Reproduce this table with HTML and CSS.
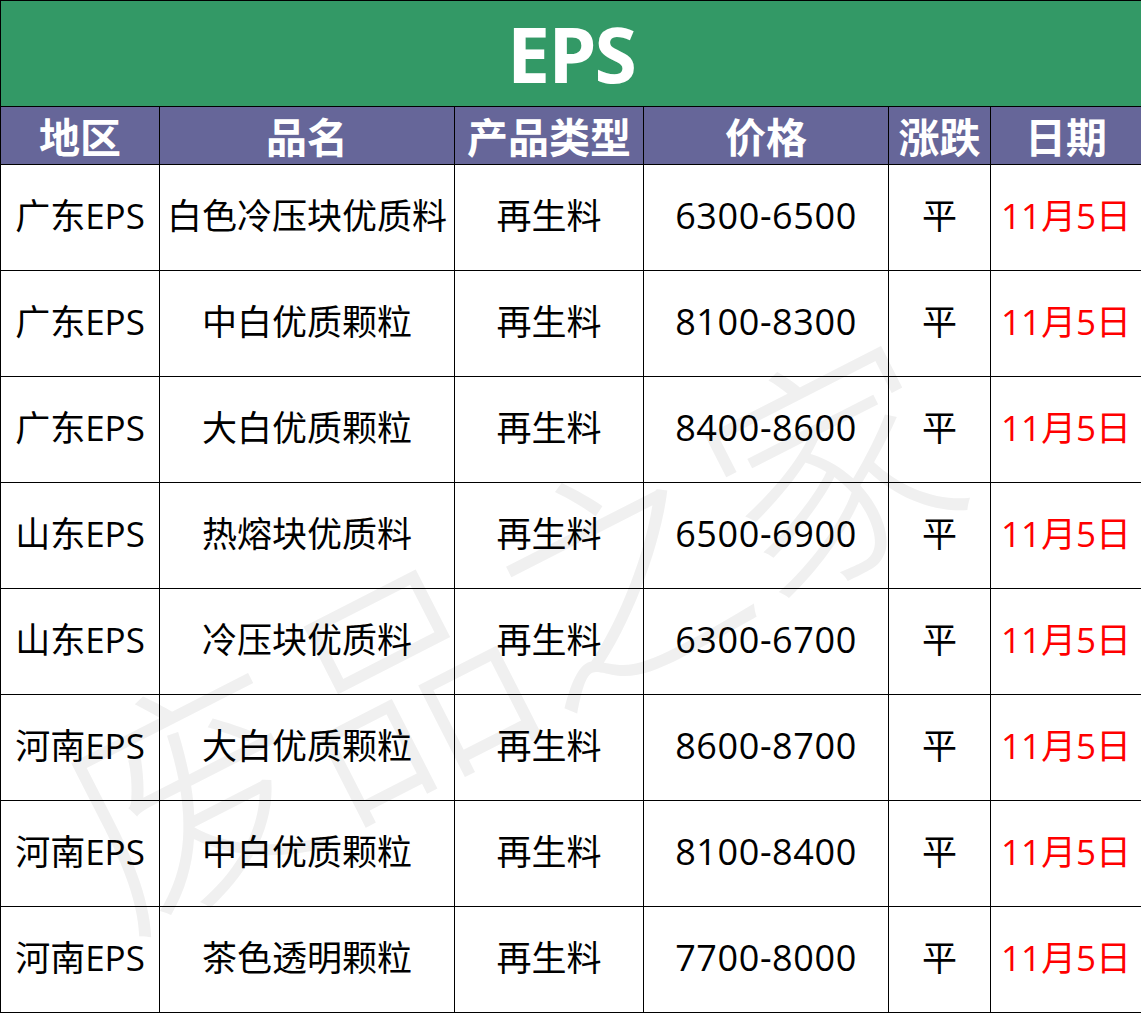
FILE: index.html
```html
<!DOCTYPE html>
<html lang="zh">
<head>
<meta charset="utf-8">
<title>EPS</title>
<link rel="stylesheet" href="styles.css">
</head>
<body>
<div class="sheet">
  <div class="watermark">废品之家</div>
  <table class="grid">
    <colgroup>
      <col class="c1"><col class="c2"><col class="c3"><col class="c4"><col class="c5"><col class="c6">
    </colgroup>
    <thead>
      <tr class="title-row"><th colspan="6" class="title">EPS</th></tr>
      <tr class="head-row">
        <th>地区</th><th>品名</th><th>产品类型</th><th>价格</th><th>涨跌</th><th>日期</th>
      </tr>
    </thead>
    <tbody>
      <tr><td>广东EPS</td><td>白色冷压块优质料</td><td>再生料</td><td class="price">6300-6500</td><td>平</td><td class="date">11月5日</td></tr>
      <tr><td>广东EPS</td><td>中白优质颗粒</td><td>再生料</td><td class="price">8100-8300</td><td>平</td><td class="date">11月5日</td></tr>
      <tr><td>广东EPS</td><td>大白优质颗粒</td><td>再生料</td><td class="price">8400-8600</td><td>平</td><td class="date">11月5日</td></tr>
      <tr><td>山东EPS</td><td>热熔块优质料</td><td>再生料</td><td class="price">6500-6900</td><td>平</td><td class="date">11月5日</td></tr>
      <tr><td>山东EPS</td><td>冷压块优质料</td><td>再生料</td><td class="price">6300-6700</td><td>平</td><td class="date">11月5日</td></tr>
      <tr><td>河南EPS</td><td>大白优质颗粒</td><td>再生料</td><td class="price">8600-8700</td><td>平</td><td class="date">11月5日</td></tr>
      <tr><td>河南EPS</td><td>中白优质颗粒</td><td>再生料</td><td class="price">8100-8400</td><td>平</td><td class="date">11月5日</td></tr>
      <tr><td>河南EPS</td><td>茶色透明颗粒</td><td>再生料</td><td class="price">7700-8000</td><td>平</td><td class="date">11月5日</td></tr>
    </tbody>
  </table>
</div>
</body>
</html>
```
FILE: styles.css
```css
html, body {
  margin: 0;
  padding: 0;
  background: #ffffff;
}
.sheet {
  position: relative;
  width: 1141px;
  height: 1013px;
  overflow: hidden;
}
.watermark {
  position: absolute;
  left: 5px;
  top: 470px;
  width: 1000px;
  height: 300px;
  line-height: 300px;
  text-align: center;
  font-family: "Noto Sans CJK SC", sans-serif;
  font-weight: 300;
  font-size: 240px;
  color: #f0f0f0;
  white-space: nowrap;
  transform: rotate(-27deg);
  transform-origin: center center;
  z-index: 0;
  pointer-events: none;
}
.grid {
  position: relative;
  z-index: 1;
  width: 1141px;
  border-collapse: collapse;
  table-layout: fixed;
  font-family: "Open Sans", "Noto Sans CJK SC", sans-serif;
}
.c1 { width: 159px; }
.c2 { width: 295px; }
.c3 { width: 189px; }
.c4 { width: 245px; }
.c5 { width: 102px; }
.c6 { width: 151px; }
.grid th, .grid td {
  border: 1px solid #000;
  padding: 0;
  text-align: center;
  vertical-align: middle;
  white-space: nowrap;
}
.title-row { height: 106px; }
.title {
  background: #339966;
  color: #fff;
  font-family: "Open Sans", "Noto Sans", sans-serif;
  font-weight: 700;
  font-size: 77px;
  letter-spacing: -2px;
  line-height: 1;
  padding-bottom: 4px;
}
.head-row { height: 58px; }
.head-row th {
  background: #666699;
  color: #fff;
  font-family: "Noto Sans CJK SC", sans-serif;
  font-weight: 700;
  font-size: 41px;
  line-height: 1;
}
.grid tbody tr { height: 106px; }
.grid td {
  background: transparent;
  color: #000;
  font-size: 35px;
  line-height: 1;
  padding-bottom: 4px;
}
.grid td.price {
  font-size: 36px;
  letter-spacing: 0.6px;
}
.grid td.date { color: #ff0000; }
```
